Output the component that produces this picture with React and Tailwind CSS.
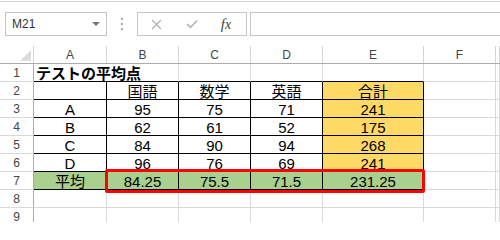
import React from "react";

const FONT = { fontFamily: '"Liberation Sans", "Noto Sans CJK JP", sans-serif' };

const COLS = ["A", "B", "C", "D", "E", "F", ""];
const WIDTHS = ["w-[73px]", "w-[72px]", "w-[72px]", "w-[72px]", "w-[101px]", "w-[72px]", "flex-1"];

const rows = [
  ["", "", "", "", "", "", ""],
  ["", "国語", "数学", "英語", "合計", "", ""],
  ["A", "95", "75", "71", "241", "", ""],
  ["B", "62", "61", "52", "175", "", ""],
  ["C", "84", "90", "94", "268", "", ""],
  ["D", "96", "76", "69", "241", "", ""],
  ["平均", "84.25", "75.5", "71.5", "231.25", "", ""],
  ["", "", "", "", "", "", ""],
  ["", "", "", "", "", "", ""],
];

function Cell({ r, c, v }) {
  const inTable = c <= 4;
  const blackBottom = r <= 6 && inTable;
  const blackRight = r >= 1 && r <= 6 && inTable;
  const noRight = r === 0 && c === 0;
  let bg = "";
  if (r === 6 && inTable) bg = "bg-[#a9d08e]";
  else if (c === 4 && r >= 1 && r <= 5) bg = "bg-[#ffd966]";
  const bottom = blackBottom ? "border-b border-b-black" : "border-b border-b-[#d9d9d9]";
  const right = noRight
    ? ""
    : blackRight
    ? "border-r border-r-black"
    : "border-r border-r-[#d9d9d9]";
  return (
    <div
      className={`${WIDTHS[c]} shrink-0 h-[18px] ${bottom} ${right} ${bg} flex items-center justify-center text-[15px] leading-none text-black whitespace-nowrap`}
    >
      <span className="pt-[1px]">{v}</span>
    </div>
  );
}

export default function App() {
  return (
    <div className="w-[500px] h-[222px] bg-white overflow-hidden relative" style={FONT}>
      <div className="h-px mt-px bg-[#d6d6d6]" />
      {/* toolbar */}
      <div className="flex h-[24px] mt-[10px]">
        <div className="ml-[5px] w-[102px] h-full border border-[#c6c6c6] flex items-center justify-between pl-[6px] pr-[6px]">
          <span className="text-[12px] text-[#333] leading-none">M21</span>
          <svg width="8" height="5" viewBox="0 0 8 5">
            <polygon points="0,0 8,0 4,4" fill="#777" />
          </svg>
        </div>
        <div className="w-[30px] h-full flex flex-col items-center justify-center gap-[3px]">
          <div className="w-[2px] h-[2px] bg-[#a8a8a8]" />
          <div className="w-[2px] h-[2px] bg-[#a8a8a8]" />
          <div className="w-[2px] h-[2px] bg-[#a8a8a8]" />
        </div>
        <div className="w-[110px] h-full border border-[#c6c6c6] flex items-center">
          <div className="w-[36px] flex justify-center">
            <svg width="11" height="11" viewBox="0 0 11 11">
              <path d="M1 1 L10 10 M10 1 L1 10" stroke="#b0b0b0" strokeWidth="1.2" fill="none" />
            </svg>
          </div>
          <div className="w-[36px] flex justify-center">
            <svg width="12" height="10" viewBox="0 0 12 10">
              <path d="M1 5 L4.5 8.5 L11 1.5" stroke="#b0b0b0" strokeWidth="1.5" fill="none" />
            </svg>
          </div>
          <div className="w-[32px] flex justify-center">
            <span
              className="italic text-[#444] text-[15px] leading-none"
              style={{ fontFamily: '"Liberation Serif", serif' }}
            >
              f<span className="text-[14px]">x</span>
            </span>
          </div>
        </div>
        <div className="ml-[3px] flex-1 h-full border-y border-l border-[#c6c6c6]" />
      </div>
      {/* column headers */}
      <div className="flex h-[28px] border-b border-[#ababab]">
        <div className="w-[34px] shrink-0 flex flex-col">
          <div className="h-[10px]" />
          <div className="flex-1 border-r border-[#d4d4d4] flex items-end justify-end pr-[2px] pb-[2px]">
            <svg width="11" height="11" viewBox="0 0 11 11">
              <polygon points="11,0 11,11 0,11" fill="#dcdcdc" />
            </svg>
          </div>
        </div>
        {COLS.map((c, i) => (
          <div key={i} className={`${WIDTHS[i]} shrink-0 flex flex-col`}>
            <div className="h-[10px]" />
            <div className="flex-1 border-r border-[#d4d4d4] flex items-center justify-center text-[12px] text-[#444] leading-none">
              {c}
            </div>
          </div>
        ))}
      </div>
      {/* rows */}
      {rows.map((row, r) => (
        <div key={r} className="flex">
          <div className="w-[34px] shrink-0 h-[18px] border-r border-r-[#ababab] border-b border-b-[#d9d9d9] flex items-center justify-center text-[12px] text-[#444] leading-none">
            {r + 1}
          </div>
          {row.map((v, c) =>
            r === 0 && c === 0 ? (
              <div
                key={c}
                className="w-[73px] shrink-0 h-[18px] border-b border-b-black flex items-center pl-[2px] overflow-visible whitespace-nowrap text-[15px] font-bold leading-none text-black relative z-10"
                style={{ fontFamily: '"Noto Sans CJK JP", sans-serif' }}
              >
                テストの平均点
              </div>
            ) : (
              <Cell key={c} r={r} c={c} v={v} />
            )
          )}
        </div>
      ))}
      {/* red highlight */}
      <div className="absolute left-[105px] top-[169px] w-[320px] h-[24px] border-[3px] border-[#ff0000] rounded-[2px]" />
    </div>
  );
}
